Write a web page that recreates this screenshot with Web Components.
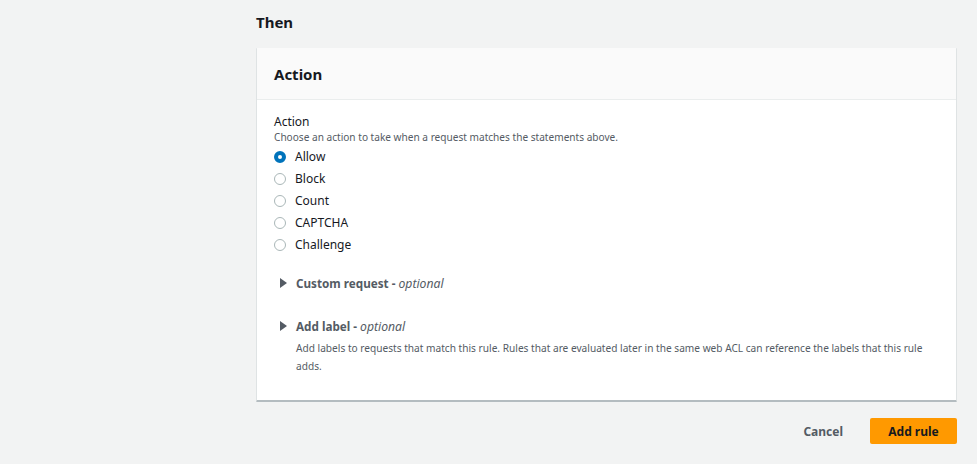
<!DOCTYPE html>
<html lang="en">
<head>
<meta charset="utf-8">
<title>Add rule</title>
<style>
  html, body { margin: 0; height: 100%; background: #f2f3f3; }
  body { font-family: "Noto Sans", "Liberation Sans", sans-serif; color: #16191f; overflow: hidden; }
</style>
</head>
<body>
<rule-page>
  <h-title slot="title">Then</h-title>
  <action-card heading="Action">
    <radio-group label="Action" hint="Choose an action to take when a request matches the statements above.">
      <radio-item checked>Allow</radio-item>
      <radio-item>Block</radio-item>
      <radio-item>Count</radio-item>
      <radio-item>CAPTCHA</radio-item>
      <radio-item>Challenge</radio-item>
    </radio-group>
    <expand-row title="Custom request"></expand-row>
    <expand-row title="Add label" desc="Add labels to requests that match this rule. Rules that are evaluated later in the same web ACL can reference the labels that this rule adds."></expand-row>
  </action-card>
  <form-actions></form-actions>
</rule-page>

<script>
class RulePage extends HTMLElement {
  constructor() {
    super();
    this.attachShadow({ mode: "open" });
    this.shadowRoot.innerHTML = `
      <style>
        :host { display: block; padding: 12px 20px 0 256px; }
      </style>
      <slot name="title"></slot>
      <slot></slot>
    `;
  }
}

class HTitle extends HTMLElement {
  constructor() {
    super();
    this.attachShadow({ mode: "open" });
    this.shadowRoot.innerHTML = `
      <style>
        :host { display: block; font-size: 15px; line-height: 20px; font-weight: 700; color: #16191f; margin-bottom: 16px; }
      </style>
      <slot></slot>
    `;
  }
}

class ActionCard extends HTMLElement {
  constructor() {
    super();
    this.attachShadow({ mode: "open" });
  }

  connectedCallback() {
    this.shadowRoot.innerHTML = `
      <style>
        :host { display: block; background: #fff; border-left: 1px solid #dfe3e4; border-right: 1px solid #dfe3e4; border-bottom: 2px solid #b4bcc0; border-radius: 1px; box-sizing: border-box; height: 354px; }
        header { background: #fafafa; border-bottom: 1px solid #eaeded; height: 52px; padding: 0 17px; display: flex; align-items: center; font-size: 15px; font-weight: 700; box-sizing: border-box; }
        .body { padding: 14px 17px 0; }
      </style>
      <header>${this.getAttribute("heading")}</header>
      <div class="body"><slot></slot></div>
    `;
  }
}

class RadioGroup extends HTMLElement {
  constructor() {
    super();
    this.attachShadow({ mode: "open" });
  }

  connectedCallback() {
    this.shadowRoot.innerHTML = `
      <style>
        :host { display: block; margin-bottom: 18px; }
        .label { font-size: 12px; line-height: 16px; color: #16191f; }
        .hint { font-size: 10.1px; line-height: 14px; color: #545b64; margin-bottom: 1px; }
      </style>
      <div class="label">${this.getAttribute("label")}</div>
      <div class="hint">${this.getAttribute("hint")}</div>
      <slot></slot>
    `;
  }
}

class RadioItem extends HTMLElement {
  constructor() {
    super();
    this.attachShadow({ mode: "open" });
  }

  connectedCallback() {
    const on = this.hasAttribute("checked");
    this.shadowRoot.innerHTML = `
      <style>
        :host { display: flex; align-items: center; gap: 9px; height: 22px; font-size: 12px; color: #16191f; }
        .dot { width: 12px; height: 12px; border-radius: 50%; box-sizing: border-box; border: 1px solid #aab7b8; background: #fff; flex: none; position: relative; top: 0.5px; }
        .dot.on { border: 4px solid #0073bb; }
      </style>
      <span class="dot ${on ? "on" : ""}"></span>
      <span><slot></slot></span>
    `;
  }
}

class ExpandRow extends HTMLElement {
  constructor() {
    super();
    this.attachShadow({ mode: "open" });
  }

  connectedCallback() {
    const desc = this.getAttribute("desc");
    this.shadowRoot.innerHTML = `
      <style>
        :host { display: block; padding: 0 6px; margin-bottom: 23px; color: #545b64; }
        .top { display: flex; align-items: center; gap: 9px; height: 20px; font-size: 11.7px; }
        svg { width: 7px; height: 10px; flex: none; }
        b { font-weight: 700; }
        i { font-style: italic; font-size: 12.2px; }
        p { margin: 4px 0 0 16px; font-size: 10.15px; line-height: 17.5px; }
      </style>
      <div class="top">
        <svg viewBox="0 0 7 10"><path d="M0 0 L7 5 L0 10 Z" fill="#545b64"/></svg>
        <span><b>${this.getAttribute("title")} -</b> <i>optional</i></span>
      </div>
      ${desc ? `<p>${desc}</p>` : ""}
    `;
  }
}

class FormActions extends HTMLElement {
  constructor() {
    super();
    this.attachShadow({ mode: "open" });
    this.shadowRoot.innerHTML = `
      <style>
        :host { display: flex; justify-content: flex-end; align-items: center; gap: 27px; margin-top: 16px; font-size: 12px; font-weight: 700; }
        .cancel { color: #545b64; }
        .primary { background: #ff9900; color: #16191f; width: 87px; height: 26px; display: flex; align-items: center; justify-content: center; border-radius: 2px; }
      </style>
      <span class="cancel">Cancel</span>
      <span class="primary">Add rule</span>
    `;
  }
}

customElements.define("rule-page", RulePage);
customElements.define("h-title", HTitle);
customElements.define("action-card", ActionCard);
customElements.define("radio-group", RadioGroup);
customElements.define("radio-item", RadioItem);
customElements.define("expand-row", ExpandRow);
customElements.define("form-actions", FormActions);
</script>
</body>
</html>
